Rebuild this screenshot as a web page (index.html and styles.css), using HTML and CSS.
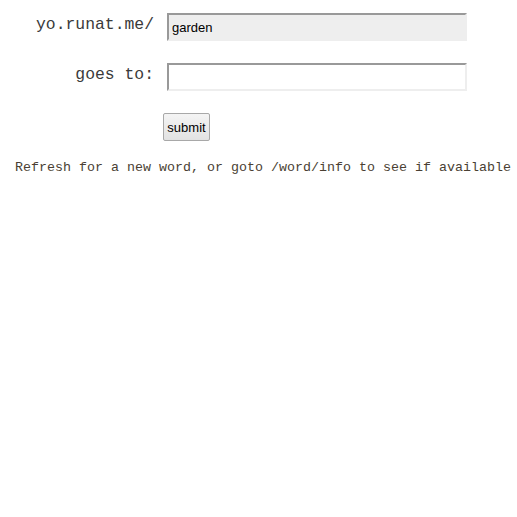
FILE: index.html
```html
<!DOCTYPE html>
<html>
<head>
<meta charset="utf-8">
<link rel="stylesheet" href="styles.css">
</head>
<body>
<form class="form">
  <div class="row">
    <label class="label" for="word">yo.runat.me/</label>
    <input class="field field-word" id="word" type="text" value="garden">
  </div>
  <div class="row">
    <label class="label" for="target">goes to:</label>
    <input class="field" id="target" type="text">
  </div>
  <div class="row row-submit">
    <button class="submit" type="submit">submit</button>
  </div>
</form>
<p class="note">Refresh for a new word, or goto /word/info to see if available</p>
</body>
</html>
```

FILE: styles.css
```css
html, body {
  margin: 0;
  padding: 0;
  background: #fff;
}

.form {
  margin: 0;
  padding-top: 13px;
  display: flex;
  flex-direction: column;
  gap: 22px;
}

.row {
  display: flex;
  align-items: center;
  height: 28px;
}

.label {
  width: 154px;
  margin-right: 13px;
  text-align: right;
  font-family: "Liberation Mono", monospace;
  font-size: 16.4px;
  line-height: 18px;
  color: #3a3a3a;
  position: relative;
  top: -2px;
}

.field {
  box-sizing: border-box;
  width: 300px;
  height: 28px;
  margin: 0;
  padding: 1px 3px 0;
  border: 2px solid;
  border-color: #999 #eee #eee #999;
  background: #fff;
  font-family: "Liberation Sans", Arial, sans-serif;
  font-size: 13px;
  color: #000;
  outline: none;
}

.field-word {
  background: #eee;
}

.row-submit {
  padding-left: 163px;
}

.submit {
  box-sizing: border-box;
  width: 47px;
  height: 28px;
  margin: 0;
  padding: 0;
  border: 1px solid #a8a8a8;
  border-radius: 2px;
  background: linear-gradient(#f4f4f4, #e2e2e2);
  font-family: "Liberation Sans", Arial, sans-serif;
  font-size: 13px;
  color: #000;
}

.note {
  margin: 19px 0 0 15px;
  font-family: "Liberation Mono", monospace;
  font-size: 13.33px;
  line-height: 16px;
  color: #4a3f33;
  white-space: nowrap;
}
```
